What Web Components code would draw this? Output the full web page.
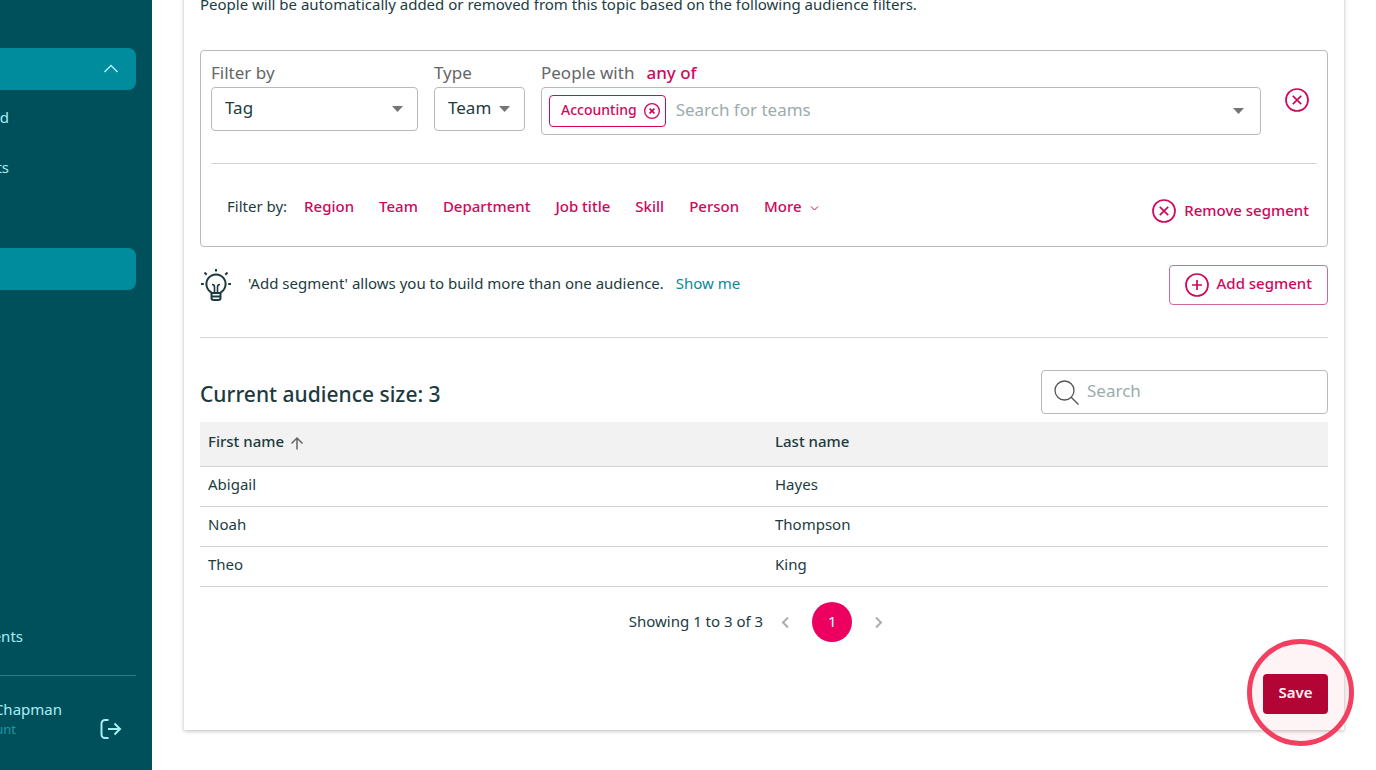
<!DOCTYPE html>
<html lang="en">
<head>
<meta charset="utf-8">
<meta name="viewport" content="width=device-width, initial-scale=1">
<title>Topic audience</title>
<style>
    :root {
        --ink: #1d3b3f;
        --muted: #666;
        --pink: #cf085c;
        --line: #b9b9b9;
        --teal: #00505c;
        --teal-active: #018c9e;
    }

    body {
        margin: 0;
        background: #fff;
        color: var(--ink);
        font: 15px/24px "Noto Sans", "Liberation Sans", sans-serif;
        overflow: hidden;
    }
</style>
</head>
<body>
<audience-page></audience-page>

<script>
const ICONS = {
    close: '<circle cx="12" cy="12" r="11"/><path d="M7.8 7.8l8.4 8.4M16.2 7.8l-8.4 8.4"/>',
    chip: '<circle cx="12" cy="12" r="11"/><path d="M8.4 8.4l7.2 7.2M15.6 8.4l-7.2 7.2" stroke-width="2.6"/>',
    plus: '<circle cx="12" cy="12" r="11"/><path d="M12 7v10M7 12h10"/>',
    bulb: '<path d="M11.5 23.5a9.6 9.6 0 1 1 9 0M11.5 23v6a2 2 0 0 0 2 2h5a2 2 0 0 0 2-2v-6M11.5 24h9M11.5 27.5h9"/>'
        + '<path stroke-width="1.6" d="M14.5 24v-6q0-2.5-2.5-2.500M17.500 24v-6q0-2.500 2.500-2.500"/>'
        + '<path d="M16 0v2.500M4.500 3.500l2.200 2.200M27.500 3.500l-2.200 2.200M1 15h2.800M28.200 15H31"/>',
    search: '<circle cx="10.5" cy="10.5" r="9.5"/><path d="M17.2 17.2l7.3 7.3"/>',
    up: '<path d="M7 13.5V2M1.5 7.5L7 2l5.5 5.5"/>',
    prev: '<path d="M7 1.5l-5 5 5 5"/>',
    next: '<path d="M2 1.5l5 5-5 5"/>',
    fold: '<path d="M1.5 8L8 1.5 14.5 8"/>',
    more: '<path d="M1 1.5L4.5 5 8 1.5"/>',
    caret: '<path d="M0 0h11L5.5 6z"/>',
    logout: '<path d="M8.5 1H5a3.5 3.5 0 0 0-3.5 3.5v11A3.5 3.5 0 0 0 5 19h3.5M8 10h12M14.5 4.5L20 10l-5.5 5.5"/>'
};

const BOXES = {
    close: [24, 24], chip: [24, 24], plus: [24, 24], bulb: [32, 32], search: [25, 25], up: [14, 14],
    prev: [9, 13], next: [9, 13], fold: [16, 10], more: [9, 6], caret: [11, 6], logout: [22, 20]
};

class UiIcon extends HTMLElement {
    connectedCallback() {
        const name = this.getAttribute('name');
        const [w, h] = BOXES[name];
        const width = this.getAttribute('size') || w;
        this.attachShadow({ mode: 'open' }).innerHTML = `
        <style>
            :host { display: inline-flex; flex: none; }
            svg {
                display: block;
                fill: ${name === 'caret' ? 'currentColor' : 'none'};
                stroke: ${name === 'caret' ? 'none' : 'currentColor'};
                stroke-width: var(--stroke, 1.7);
            }
        </style>
        <svg width="${width}" height="${width * h / w}" viewBox="0 0 ${w} ${h}" aria-hidden="true">${ICONS[name]}</svg>`;
    }
}

class SideNav extends HTMLElement {
    connectedCallback() {
        this.attachShadow({ mode: 'open' }).innerHTML = `
        <style>
            :host {
                display: flex;
                flex-direction: column;
                box-sizing: border-box;
                width: 152px;
                padding: 48px 16px 25px 0;
                overflow: hidden;
                background: var(--teal);
                color: #a8eef5;
            }
            a { color: inherit; text-decoration: none; }
            .item {
                display: flex;
                align-items: center;
                box-sizing: border-box;
                height: 42px;
                margin-bottom: 8px;
                padding-bottom: 4px;
            }
            .active {
                justify-content: flex-end;
                padding: 0 17px 0 0;
                border-radius: 0 8px 8px 0;
                background: var(--teal-active);
                --stroke: 1.5;
            }
            /* labels run off the left edge of the collapsed rail */
            .label {
                display: flex;
                justify-content: flex-end;
                width: 9px;
                white-space: nowrap;
            }
            .foot { margin-top: auto; }
            .wide { width: 23px; margin-bottom: 27px; }
            .user {
                display: flex;
                justify-content: space-between;
                align-items: flex-end;
                padding: 21px 14px 0 0;
                border-top: 1px solid #16818c;
            }
            .name { width: 62px; }
            .role { width: 16px; padding-bottom: 8px; font-size: 13px; line-height: 16px; color: #1c97a1; }
            button {
                display: flex;
                margin-bottom: 6px;
                padding: 0;
                border: 0;
                background: none;
                color: inherit;
                --stroke: 2;
            }
        </style>
        <a class="item active" href="#" aria-label="Section"><ui-icon name="fold"></ui-icon></a>
        <a class="item" href="#"><span class="label">d</span></a>
        <a class="item" href="#"><span class="label">ts</span></a>
        <span class="item"></span>
        <a class="item active" href="#" aria-label="Current page"></a>
        <a class="foot label wide" href="#">ents</a>
        <div class="user">
            <div>
                <div class="label name">Chapman</div>
                <div class="label role">unt</div>
            </div>
            <button type="button" aria-label="Log out"><ui-icon name="logout"></ui-icon></button>
        </div>`;
    }
}

class SelectField extends HTMLElement {
    connectedCallback() {
        this.attachShadow({ mode: 'open' }).innerHTML = `
        <style>
            :host { display: block; }
            label { display: block; height: 26px; color: var(--muted); font-size: 17px; line-height: 24px; }
            .box { display: grid; align-items: center; }
            select, ui-icon { grid-area: 1 / 1; }
            select {
                appearance: none;
                box-sizing: border-box;
                width: 100%;
                height: 44px;
                padding: 0 13px 2px;
                border: 1px solid var(--line);
                border-radius: 4px;
                background: #fff;
                color: var(--ink);
                font: inherit;
                font-size: 17px;
            }
            ui-icon { justify-self: end; margin-right: 15px; color: #757575; pointer-events: none; }
        </style>
        <label for="field">${this.getAttribute('label')}</label>
        <div class="box">
            <select id="field"><option>${this.getAttribute('value')}</option></select>
            <ui-icon name="caret"></ui-icon>
        </div>`;
    }
}

class TeamPicker extends HTMLElement {
    connectedCallback() {
        this.attachShadow({ mode: 'open' }).innerHTML = `
        <style>
            :host { display: block; }
            .label { display: flex; align-items: start; gap: 12px; height: 26px; color: var(--muted); font-size: 17px; line-height: 24px; }
            button { padding: 0; border: 0; background: none; color: var(--pink); font: inherit; }
            .any { font-weight: 500; }
            .box {
                display: flex;
                align-items: center;
                box-sizing: border-box;
                height: 48px;
                padding: 0 16px 0 7px;
                border: 1px solid var(--line);
                border-radius: 4px;
                color: #757575;
            }
            .chip {
                display: flex;
                align-items: center;
                gap: 7px;
                box-sizing: border-box;
                height: 32px;
                padding: 0 5px 0 11px;
                border: 1px solid var(--pink);
                border-radius: 4px;
                color: var(--pink);
                font-size: 14px;
                font-weight: 500;
            }
            .chip span { padding-bottom: 2px; }
            .chip button { display: flex; --stroke: 2; }
            input {
                flex: 1;
                min-width: 0;
                padding: 0 0 3px 10px;
                border: 0;
                outline: 0;
                background: none;
                font: inherit;
                font-size: 17px;
            }
            input::placeholder { color: #9aacac; opacity: 1; }
        </style>
        <div class="label"><label for="teams">People with</label><button class="any" type="button">any of</button></div>
        <div class="box">
            <div class="chip"><span>Accounting</span><button type="button" aria-label="Remove Accounting"><ui-icon name="chip" size="16"></ui-icon></button></div>
            <input id="teams" type="text" placeholder="Search for teams">
            <ui-icon name="caret"></ui-icon>
        </div>`;
    }
}

class AudienceSegment extends HTMLElement {
    connectedCallback() {
        this.attachShadow({ mode: 'open' }).innerHTML = `
        <style>
            :host {
                display: block;
                padding: 10px;
                border: 1px solid var(--line);
                border-radius: 4px;
            }
            .fields {
                display: grid;
                grid-template-columns: 207px 91px 1fr 24px;
                gap: 16px;
                padding: 0 8px 28px 0;
                border-bottom: 1px solid #d6d6d6;
            }
            team-picker { margin-right: 8px; }
            button {
                display: flex;
                align-items: center;
                padding: 0;
                border: 0;
                background: none;
                color: var(--pink);
                font: inherit;
                font-weight: 500;
            }
            .clear { align-self: start; margin-top: 27px; }
            .filters {
                display: flex;
                align-items: start;
                gap: 25px;
                padding: 30px 8px 12px 16px;
            }
            .filters span { margin-right: -8px; }
            .filters button { gap: 8px; }
            .filters .remove { margin: 4px 0 0 auto; }
            .more ui-icon { margin-top: 4px; --stroke: 1; }
            .filters .remove span { margin: 0; padding-bottom: 2px; }
        </style>
        <div class="fields">
            <select-field label="Filter by" value="Tag"></select-field>
            <select-field label="Type" value="Team"></select-field>
            <team-picker></team-picker>
            <button class="clear" type="button" aria-label="Clear filter"><ui-icon name="close"></ui-icon></button>
        </div>
        <div class="filters">
            <span>Filter by:</span>
            <button type="button">Region</button>
            <button type="button">Team</button>
            <button type="button">Department</button>
            <button type="button">Job title</button>
            <button type="button">Skill</button>
            <button type="button">Person</button>
            <button class="more" type="button">More<ui-icon name="more"></ui-icon></button>
            <button class="remove" type="button"><ui-icon name="close"></ui-icon><span>Remove segment</span></button>
        </div>`;
    }
}

class SegmentTip extends HTMLElement {
    connectedCallback() {
        this.attachShadow({ mode: 'open' }).innerHTML = `
        <style>
            :host {
                display: flex;
                align-items: center;
                padding: 18px 0 32px;
                border-bottom: 1px solid #d6d6d6;
            }
            ui-icon { --stroke: 2; }
            p { flex: 1; margin: 0 16px; padding-bottom: 4px; }
            a { margin-left: 8px; color: #078a95; text-decoration: none; }
            button {
                display: flex;
                align-items: center;
                gap: 8px;
                box-sizing: border-box;
                height: 40px;
                padding: 0 15px;
                border: 1px solid #cf6a98;
                border-radius: 4px;
                background: #fff;
                color: var(--pink);
                font: inherit;
                font-weight: 500;
            }
            button ui-icon { --stroke: 1.7; }
            span { padding-bottom: 4px; }
        </style>
        <ui-icon name="bulb"></ui-icon>
        <p>'Add segment' allows you to build more than one audience. <a href="#">Show me</a></p>
        <button type="button"><ui-icon name="plus"></ui-icon><span>Add segment</span></button>`;
    }
}

class SearchBox extends HTMLElement {
    connectedCallback() {
        this.attachShadow({ mode: 'open' }).innerHTML = `
        <style>
            :host {
                display: flex;
                align-items: center;
                gap: 8px;
                box-sizing: border-box;
                width: 287px;
                height: 44px;
                padding: 0 12px;
                border: 1px solid var(--line);
                border-radius: 4px;
                color: #555;
                --stroke: 1.3;
            }
            input {
                flex: 1;
                min-width: 0;
                padding: 0 0 3px;
                border: 0;
                outline: 0;
                background: none;
                font: inherit;
                font-size: 17px;
            }
            input::placeholder { color: #9aacac; opacity: 1; }
        </style>
        <ui-icon name="search"></ui-icon>
        <input type="text" placeholder="Search" aria-label="Search">`;
    }
}

class PeopleTable extends HTMLElement {
    connectedCallback() {
        const people = [['Abigail', 'Hayes'], ['Noah', 'Thompson'], ['Theo', 'King']];
        this.attachShadow({ mode: 'open' }).innerHTML = `
        <style>
            :host { display: block; }
            table { width: 100%; border-collapse: collapse; table-layout: fixed; }
            th, td {
                padding: 0 8px 6px;
                border-bottom: 1px solid #d2d2d2;
                text-align: left;
            }
            th { height: 38px; background: #f2f2f2; font-weight: 500; }
            th:first-child { width: 551px; }
            td { height: 33px; }
            .sort { display: inline-flex; align-items: center; gap: 6px; }
            ui-icon { margin-top: 4px; color: #666; --stroke: 1.5; }
        </style>
        <table>
            <thead>
                <tr><th><span class="sort">First name<ui-icon name="up"></ui-icon></span></th><th>Last name</th></tr>
            </thead>
            <tbody>
                ${people.map(([first, last]) => `<tr><td>${first}</td><td>${last}</td></tr>`).join('')}
            </tbody>
        </table>`;
    }
}

class PageControls extends HTMLElement {
    connectedCallback() {
        this.attachShadow({ mode: 'open' }).innerHTML = `
        <style>
            :host {
                display: flex;
                align-items: center;
                justify-content: center;
                padding: 15px 16px 0 0;
            }
            span { margin: 0 18px 3px 0; }
            button {
                display: flex;
                justify-content: center;
                padding: 0;
                border: 0;
                background: none;
                color: #a9afaf;
                font: inherit;
                --stroke: 2;
            }
            .page {
                align-items: center;
                width: 40px;
                height: 40px;
                margin: 0 22px;
                padding-bottom: 3px;
                border-radius: 50%;
                background: #ec0060;
                color: #fff;
            }
        </style>
        <span>Showing 1 to 3 of 3</span>
        <button type="button" aria-label="Previous page"><ui-icon name="prev"></ui-icon></button>
        <button class="page" type="button">1</button>
        <button type="button" aria-label="Next page"><ui-icon name="next"></ui-icon></button>`;
    }
}

class SaveButton extends HTMLElement {
    connectedCallback() {
        this.attachShadow({ mode: 'open' }).innerHTML = `
        <style>
            :host { display: block; position: relative; }
            button {
                display: block;
                width: 65px;
                height: 40px;
                padding: 0 0 5px;
                border: 0;
                border-radius: 4px;
                background: #b00034;
                color: #fff;
                font: inherit;
                font-weight: 600;
            }
            /* highlight ring over the button */
            .ring {
                position: absolute;
                top: -35px;
                left: -16px;
                box-sizing: border-box;
                width: 107px;
                height: 107px;
                border: 5px solid #f23f60;
                border-radius: 50%;
                background: rgba(242, 63, 96, .06);
                pointer-events: none;
            }
        </style>
        <button type="button"><slot></slot></button>
        <div class="ring"></div>`;
    }
}

class AudiencePage extends HTMLElement {
    connectedCallback() {
        this.attachShadow({ mode: 'open' }).innerHTML = `
        <style>
            :host { display: flex; min-height: 100vh; }
            main { flex: 1; min-width: 0; padding: 0 32px 40px; }
            /* the top of the card is scrolled out of view */
            .card {
                margin-top: -8px;
                padding: 0 16px 16px;
                background: #fff;
                box-shadow: 0 1px 4px rgba(0, 0, 0, .28);
            }
            .intro { margin: 0 0 34px; }
            .head {
                display: flex;
                align-items: center;
                justify-content: space-between;
                padding: 32px 0 8px;
            }
            h2 { margin: 4px 0 0; font-size: 21px; font-weight: 500; line-height: 32px; }
            .actions { display: flex; justify-content: flex-end; padding-top: 32px; }
        </style>
        <side-nav></side-nav>
        <main>
            <section class="card">
                <p class="intro">People will be automatically added or removed from this topic based on the following audience filters.</p>
                <audience-segment></audience-segment>
                <segment-tip></segment-tip>
                <div class="head">
                    <h2>Current audience size: 3</h2>
                    <search-box></search-box>
                </div>
                <people-table></people-table>
                <page-controls></page-controls>
                <div class="actions"><save-button>Save</save-button></div>
            </section>
        </main>`;
    }
}

customElements.define('ui-icon', UiIcon);
customElements.define('side-nav', SideNav);
customElements.define('select-field', SelectField);
customElements.define('team-picker', TeamPicker);
customElements.define('audience-segment', AudienceSegment);
customElements.define('segment-tip', SegmentTip);
customElements.define('search-box', SearchBox);
customElements.define('people-table', PeopleTable);
customElements.define('page-controls', PageControls);
customElements.define('save-button', SaveButton);
customElements.define('audience-page', AudiencePage);
</script>
</body>
</html>
